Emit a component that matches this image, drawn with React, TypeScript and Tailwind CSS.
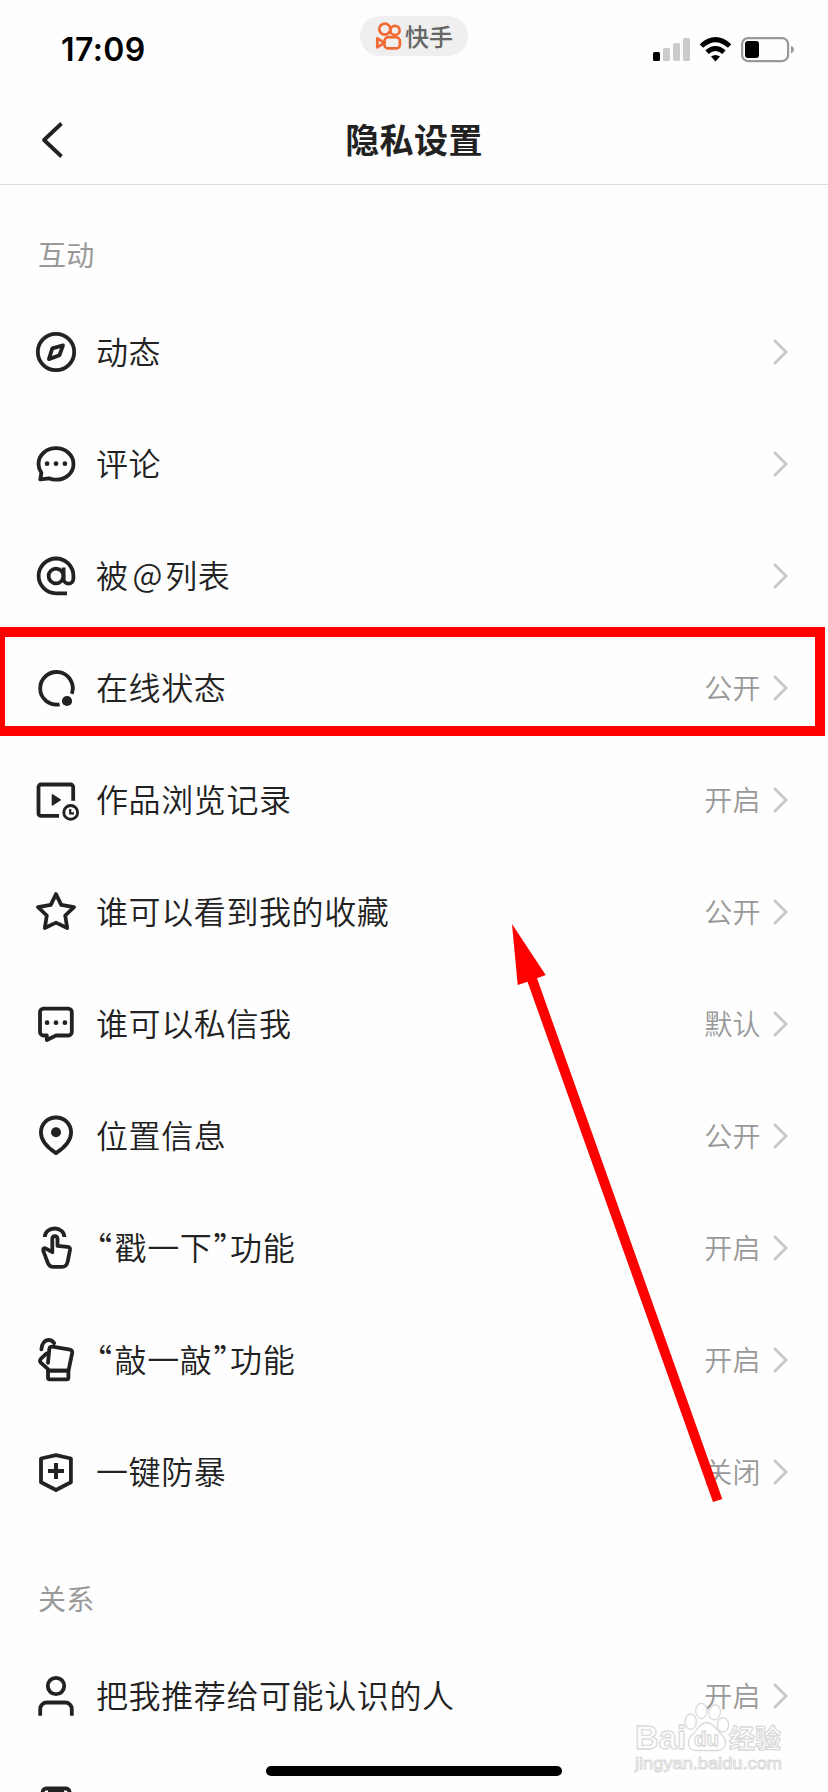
import type { ReactNode } from "react";

interface Setting {
  label: ReactNode;
  icon: ReactNode;
  value?: string;
}

const icons = {
  compass: (
    <>
      <circle cx="24" cy="24" r="18.2" />
      <path d="M31 17.3 20.3 20.3 16.9 31.1 27.5 27.2Z" />
    </>
  ),
  comment: (
    <>
      <path d="M8.3 39.4 9.4 32.8C7.4 30 6.5 27 6.5 24 6.5 15 14.3 8.2 24 8.2S41.5 15 41.5 24 33.7 39.7 24 39.7C21.5 39.7 19 39.2 17 38.3Z" />
      <Dots y={23.7} />
    </>
  ),
  at: (
    <>
      <circle cx="24" cy="24" r="7.4" />
      <path d="M35 41.3H24A17.4 17.4 0 1 1 41.4 24V26.8A4.9 4.9 0 0 1 31.6 26.8V15.5" strokeLinecap="butt" />
    </>
  ),
  online: (
    <>
      <path d="M39.8 29.8A16.3 16.3 0 1 0 27.6 40.3" strokeLinecap="butt" />
      <circle cx="35" cy="37" r="5.1" fill="currentColor" stroke="none" />
    </>
  ),
  history: (
    <>
      <path d="M27 39.9H9A2.5 2.5 0 0 1 6.5 37.4V11A2.5 2.5 0 0 1 9 8.5H38.7A2.5 2.5 0 0 1 41.2 11V24.8" strokeLinecap="butt" />
      <path d="M20.4 18.8V29L28.2 23.9Z" fill="currentColor" strokeWidth="1.4" />
      <circle cx="38.7" cy="36.4" r="6.9" strokeWidth="2.9" />
      <path d="M38.2 33V37.4H42" strokeWidth="2.2" strokeLinecap="butt" strokeLinejoin="miter" />
    </>
  ),
  star: <path d="M24 6.1 29.2 16.9 42 19.1 33.2 27.5 35.2 40 24 34.6 12.8 40 14.8 27.5 6 19.1 18.8 16.9Z" />,
  message: (
    <>
      <path d="M11.5 8.6H36.3A3.5 3.5 0 0 1 39.8 12.1V32A3.5 3.5 0 0 1 36.3 35.5H24L14.8 40V35.5H11.5A3.5 3.5 0 0 1 8 32V12.1A3.5 3.5 0 0 1 11.5 8.6Z" />
      <Dots y={22.7} />
    </>
  ),
  pin: (
    <>
      <path d="M24 41.2C15.5 35.7 8.9 28.8 8.9 20.6 8.9 12 15.4 5.5 24 5.5S39.1 12 39.1 20.6C39.1 28.8 32.5 35.7 24 41.2Z" />
      <circle cx="24" cy="20.3" r="5" fill="currentColor" stroke="none" />
    </>
  ),
  poke: (
    <>
      <path d="M12.8 13C13 8 17 4.5 22.6 4.5S32.2 8 32.4 13" strokeLinecap="butt" />
      <path d="M20.3 28.2V14.8A2.6 2.6 0 0 1 25.5 14.8V21.9L35.6 22.9C37.5 23.2 38.2 24.4 38 26L35.7 37.5C35 41 33 42.9 29.8 42.9H21.3C18.8 42.9 17.2 41.8 16.1 39.7L11.3 26.8C10.7 24.4 12.4 23.5 14 24.6Z" />
    </>
  ),
  knock: (
    <>
      <path d="M9.4 13.4C9.7 7.4 13 4 16.8 4 19.2 4 20.8 5.2 22.2 7.2" />
      <path d="M16 26.8 17.3 13.2C17.5 11.3 18.7 10.3 20.5 10.6L38 13.7C39.7 14 40.6 15.2 40.2 16.9L36.5 34.6H16V33.2L9 26.8C7.7 25.5 7.7 24.3 8.8 22.8L14.6 17.4" />
      <path d="M16 34.6H36.4V41.8A1.5 1.5 0 0 1 34.9 43.3H17.5A1.5 1.5 0 0 1 16 41.8Z" />
    </>
  ),
  shield: (
    <>
      <path d="M24 7.2 38.9 10.5V34.2L24 42 9 34.2V10.5Z" />
      <path d="M24 15V31M16 23H32" strokeWidth="4" strokeLinecap="butt" />
    </>
  ),
  person: (
    <>
      <circle cx="24" cy="14" r="8.2" />
      <path d="M8.2 43.7V37A6.6 6.6 0 0 1 14.8 30.5H33.2A6.6 6.6 0 0 1 39.8 37V43.7" strokeLinecap="butt" />
    </>
  ),
  contacts: (
    <>
      <rect x="10.6" y="4.5" width="27" height="38" rx="3.5" />
      <path d="M16 6.2H32" strokeWidth="4" strokeLinecap="butt" />
    </>
  ),
};

const interactions: Setting[] = [
  { label: "动态", icon: icons.compass },
  { label: "评论", icon: icons.comment },
  { label: <>被<span className="relative -top-px mr-[2px] ml-[4px]">@</span>列表</>, icon: icons.at },
  { label: "在线状态", icon: icons.online, value: "公开" },
  { label: "作品浏览记录", icon: icons.history, value: "开启" },
  { label: "谁可以看到我的收藏", icon: icons.star, value: "公开" },
  { label: "谁可以私信我", icon: icons.message, value: "默认" },
  { label: "位置信息", icon: icons.pin, value: "公开" },
  { label: <Quoted text="戳一下" />, icon: icons.poke, value: "开启" },
  { label: <Quoted text="敲一敲" />, icon: icons.knock, value: "开启" },
  { label: "一键防暴", icon: icons.shield, value: "关闭" },
];

const relations: Setting[] = [
  { label: "把我推荐给可能认识的人", icon: icons.person, value: "开启" },
  { label: "", icon: icons.contacts },
];

function Dots({ y }: { y: number }) {
  return (
    <g fill="currentColor" stroke="none">
      <circle cx="15.1" cy={y} r="2.4" />
      <circle cx="24" cy={y} r="2.4" />
      <circle cx="32.9" cy={y} r="2.4" />
    </g>
  );
}

// The CJK quotes are full width, pull in their empty half
function Quoted({ text }: { text: string }) {
  return (
    <>
      <span className="mr-[2px] -ml-[16px] font-normal">“</span>
      {text}
      <span className="-mr-[16px] ml-[1px] font-normal">”</span>
      功能
    </>
  );
}

function SettingRow({ label, icon, value }: Setting) {
  return (
    <div className="flex h-28 shrink-0 items-center pr-10 pl-8">
      <svg
        className="size-12 shrink-0 overflow-visible"
        viewBox="0 0 48 48"
        fill="none"
        stroke="currentColor"
        strokeWidth="3.8"
        strokeLinecap="round"
        strokeLinejoin="round"
      >
        {icon}
      </svg>
      <span className="ml-4 flex-1 pb-[5px] text-[32px] leading-8 font-[350] tracking-[0.6px] whitespace-nowrap">{label}</span>
      {value && <span className="mr-[11px] pb-[3px] text-[28px] leading-7 font-[350] tracking-[0.4px] text-[#999]">{value}</span>}
      <svg className="h-7 w-4" viewBox="0 0 16 28" fill="none" stroke="#c6c6c6" strokeWidth="2.8" strokeLinecap="round" strokeLinejoin="round">
        <path d="M3 3 14 14 3 25" />
      </svg>
    </div>
  );
}

function SectionTitle({ children }: { children: ReactNode }) {
  return <h2 className="text-[28px] leading-7 tracking-[0.3px] text-[#999]">{children}</h2>;
}

function StatusBar() {
  return (
    <div className="flex h-24 shrink-0 items-start">
      <div className="w-[360px] pt-[34px] pl-[61px] font-[Inter] text-[32px] leading-8 font-semibold tracking-[0.4px] text-black">17:09</div>
      <div className="mt-4 flex h-10 w-[108px] items-center rounded-full bg-[#efefef] pl-[15px]">
        <svg className="h-[30px] w-[27px]" viewBox="0 0 27 30" fill="none" stroke="#f26a33" strokeWidth="2.7" strokeLinejoin="round">
          <circle cx="9.8" cy="8.1" r="5.5" />
          <circle cx="20" cy="9.4" r="4.6" />
          <rect x="9.4" y="16.2" width="15.5" height="11.2" rx="4" />
          <path d="M9.4 21.8 2.3 17.3V26.3Z" />
        </svg>
        <span className="ml-[3px] pb-px text-2xl leading-none font-medium text-[#666]">快手</span>
      </div>
      <svg className="mt-[34px] ml-[182px] h-8 w-[148px]" viewBox="650 34 148 32">
        <rect x="653" y="52" width="7" height="9" rx="1.5" />
        <g fill="#cbcbcb">
          <rect x="663" y="48" width="7" height="13" rx="1.5" />
          <rect x="673" y="43" width="7" height="18" rx="1.5" />
          <rect x="683" y="38" width="7" height="23" rx="1.5" />
        </g>
        <g fill="none" stroke="#000" strokeWidth="5">
          <path d="M701.4 46Q715.5 33.4 729.6 46" />
          <path d="M707 52.2Q715.5 44.8 724 52.2" />
        </g>
        <path d="M711 56.6Q715.5 53.2 720 56.6L715.5 61.4Z" />
        <rect x="742.1" y="38.1" width="46" height="23" rx="6" fill="none" stroke="#999" strokeWidth="2.2" />
        <rect x="745" y="41" width="14" height="17" rx="3" />
        <path d="M791 46Q794 47 794 49.5T791 53.5Z" fill="#999" />
      </svg>
    </div>
  );
}

function Watermark() {
  return (
    <svg
      className="absolute top-[1696px] left-[628px] h-[84px] w-40"
      viewBox="628 1696 160 84"
      fill="#fff"
      fillOpacity="0.75"
      stroke="#dadada"
      strokeWidth="1.3"
      fontFamily="'Liberation Sans', sans-serif"
    >
      <ellipse cx="690.7" cy="1721.7" rx="5.6" ry="7.6" />
      <ellipse cx="701.3" cy="1711" rx="5.6" ry="7.6" />
      <ellipse cx="714.6" cy="1712.3" rx="5.8" ry="7.6" transform="rotate(12 714.6 1712.3)" />
      <ellipse cx="723" cy="1724.8" rx="5.6" ry="7.2" />
      <path d="M706.5 1722.5C713 1722.5 716.5 1730 721 1734 727.5 1740 727 1750.5 717 1750.5 712 1750.5 701 1750.5 697 1750.5 686 1750.5 686.5 1740 693 1734 697.5 1730 700 1722.5 706.5 1722.5Z" />
      <text x="635" y="1749" fontSize="33" fontWeight="700" textLength="51" lengthAdjust="spacingAndGlyphs">Bai</text>
      <text x="694" y="1746" fontSize="21" fontWeight="700" textLength="25" lengthAdjust="spacingAndGlyphs">du</text>
      <text x="729" y="1748" fontSize="26" fontWeight="700" fontFamily="'Noto Sans CJK SC', sans-serif" textLength="52">经验</text>
      <text x="635" y="1769" fontSize="17" textLength="147" lengthAdjust="spacingAndGlyphs" strokeWidth="1">jingyan.baidu.com</text>
    </svg>
  );
}

export default function App() {
  return (
    <div className="relative flex h-[1792px] w-[828px] flex-col overflow-hidden bg-[#fefefe] font-['Noto_Sans_CJK_SC',sans-serif] text-[#222]">
      <StatusBar />
      <header className="flex h-[89px] shrink-0 items-start border-b border-[#dedede] px-10 pt-[22px]">
        <svg className="mt-1 h-10 w-7" viewBox="0 0 28 40" fill="none" stroke="currentColor" strokeWidth="3.8" strokeLinecap="butt" strokeLinejoin="round">
          <path d="M21.5 1.5 4 18 21.5 34.5" />
        </svg>
        <h1 className="-mt-px mr-7 flex-1 text-center text-[34px] leading-[44px] font-bold tracking-[0.4px]">隐私设置</h1>
      </header>

      <div className="h-[111px] shrink-0 pt-[55px] pl-[38px]">
        <SectionTitle>互动</SectionTitle>
      </div>
      {interactions.map((item, index) => (
        <SettingRow key={index} {...item} />
      ))}

      <div className="h-28 shrink-0 pt-14 pl-[38px]">
        <SectionTitle>关系</SectionTitle>
      </div>
      {relations.map((item, index) => (
        <SettingRow key={index} {...item} />
      ))}

      {/* highlight around the online status row */}
      <div className="absolute top-[627px] -left-[5px] h-[109px] w-[830px] border-[10.5px] border-[#fe0000]" />
      <svg className="absolute top-[920px] left-[500px] h-[590px] w-[240px]" viewBox="500 920 240 590">
        <path d="M512 924 545.7 975 537 978.3 722.3 1499 713 1502 527.5 981.8 517.7 985Z" fill="#fe0000" />
      </svg>

      <Watermark />
      <div className="absolute top-[1766px] left-[266px] h-2.5 w-[296px] rounded-full bg-black" />
    </div>
  );
}
